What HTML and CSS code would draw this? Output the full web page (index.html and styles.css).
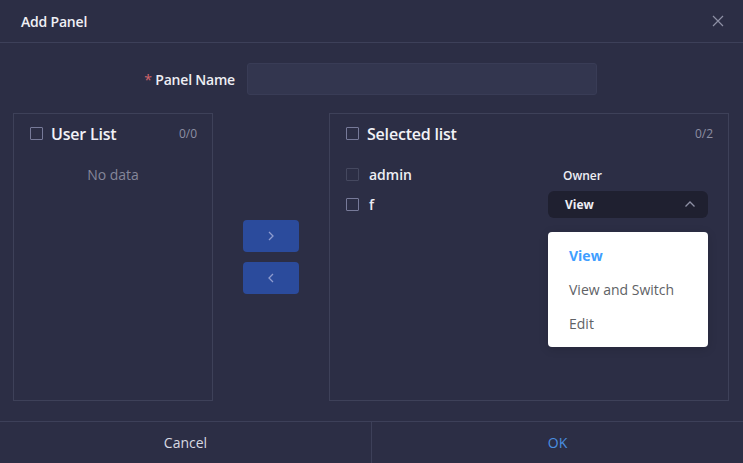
FILE: index.html
```html
<!DOCTYPE html>
<html>
<head>
<meta charset="utf-8">
<link rel="stylesheet" href="styles.css">
</head>
<body>
<div class="dialog">
  <div class="header">
    <span class="title">Add Panel</span>
    <svg class="close" width="12" height="12" viewBox="0 0 12 12"><path d="M1 1L11 11M11 1L1 11" stroke="#8e90a5" stroke-width="1.2" fill="none"/></svg>
  </div>
  <div class="content">
    <div class="form-row">
      <label class="label"><span class="req">*</span> Panel Name</label>
      <div class="input"></div>
    </div>
    <div class="transfer">
      <div class="panel left">
        <div class="panel-head">
          <span class="cb"></span>
          <span class="panel-title">User List</span>
          <span class="count">0/0</span>
        </div>
        <div class="empty">No data</div>
      </div>
      <div class="ops">
        <div class="op"><svg width="10" height="12" viewBox="0 0 10 12"><path d="M3 2L7 6L3 10" stroke="#8e9bcf" stroke-width="1.3" fill="none"/></svg></div>
        <div class="op"><svg width="10" height="12" viewBox="0 0 10 12"><path d="M7 2L3 6L7 10" stroke="#8e9bcf" stroke-width="1.3" fill="none"/></svg></div>
      </div>
      <div class="panel right">
        <div class="panel-head">
          <span class="cb"></span>
          <span class="panel-title">Selected list</span>
          <span class="count">0/2</span>
        </div>
        <div class="rows">
          <div class="row">
            <span class="cb disabled"></span>
            <span class="name">admin</span>
            <div class="role"><span class="owner">Owner</span></div>
          </div>
          <div class="row">
            <span class="cb"></span>
            <span class="name">f</span>
            <div class="role">
              <div class="select">
                <span>View</span>
                <svg width="12" height="8" viewBox="0 0 12 8"><path d="M1.5 6.5L6 2L10.5 6.5" stroke="#8e90a5" stroke-width="1.3" fill="none"/></svg>
                <div class="menu">
                  <div class="item active">View</div>
                  <div class="item">View and Switch</div>
                  <div class="item">Edit</div>
                </div>
              </div>
            </div>
          </div>
        </div>
      </div>
    </div>
  </div>
  <div class="footer">
    <div class="btn">Cancel</div>
    <div class="btn ok">OK</div>
  </div>
</div>
</body>
</html>
```

FILE: styles.css
```css
* { box-sizing: border-box; }
html, body { margin: 0; padding: 0; }
body {
  background: #2c2e45;
  font-family: "Open Sans", "Noto Sans", sans-serif;
  color: #e6e7ee;
  width: 743px;
  height: 463px;
  overflow: hidden;
}
.dialog { display: flex; flex-direction: column; height: 463px; }
.header {
  height: 43px;
  border-bottom: 1px solid #3d4059;
  display: flex;
  align-items: center;
  justify-content: space-between;
  padding: 0 19px 0 21px;
}
.title { font-size: 14px; font-weight: 600; color: #f0f0f5; letter-spacing: -0.2px; }
.close { display: block; }
.content { flex: 1; padding: 20px 13px 0 13px; }
.form-row { display: flex; align-items: center; height: 32px; }
.label {
  width: 222px;
  text-align: right;
  font-size: 14px;
  font-weight: 600;
  color: #eeeef4;
  letter-spacing: -0.2px;
}
.req { color: #d4656b; font-weight: 400; }
.input {
  margin-left: 12px;
  width: 350px;
  height: 32px;
  background: #33364f;
  border: 1px solid #393c56;
  border-radius: 3px;
}
.transfer { display: flex; margin-top: 18px; height: 288px; }
.panel { border: 1px solid #3e4159; height: 288px; }
.panel.left { width: 200px; }
.panel.right { width: 400px; }
.panel-head {
  display: flex;
  align-items: center;
  height: 39px;
  padding: 0 15px 0 16px;
}
.cb {
  width: 13px;
  height: 13px;
  border: 1px solid #777a99;
  border-radius: 1px;
  flex: none;
}
.cb.disabled { border-color: #45485f; }
.panel-title { margin-left: 8px; font-size: 16px; font-weight: 600; color: #f2f2f7; letter-spacing: -0.2px; }
.count { margin-left: auto; font-size: 12px; color: #8d8fa3; }
.empty { text-align: center; font-size: 14px; color: #85879a; margin-top: 12px; }
.ops {
  width: 116px;
  display: flex;
  flex-direction: column;
  align-items: center;
  justify-content: center;
  gap: 10px;
}
.op {
  width: 56px;
  height: 32px;
  background: #2b4b9c;
  border-radius: 4px;
  display: flex;
  align-items: center;
  justify-content: center;
}
.op svg { display: block; }
.rows { padding-top: 6px; }
.row { display: flex; align-items: center; height: 30px; padding-left: 16px; padding-right: 20px; }
.name { margin-left: 10px; font-size: 14px; font-weight: 600; color: #eeeef4; }
.role { margin-left: auto; width: 160px; }
.owner { padding-left: 15px; font-size: 12px; font-weight: 600; color: #eeeef4; }
.select {
  position: relative;
  height: 27px;
  background: #1f2030;
  border-radius: 6px;
  display: flex;
  align-items: center;
  justify-content: space-between;
  padding: 0 12px 0 17px;
  font-size: 12px;
  font-weight: 700;
  color: #eeeef4;
}
.select svg { display: block; }
.menu {
  position: absolute;
  top: 41px;
  left: 0;
  width: 160px;
  background: #ffffff;
  border-radius: 4px;
  padding: 7px 0 6px;
  box-shadow: 0 2px 10px rgba(0,0,0,0.15);
}
.item {
  height: 34px;
  line-height: 34px;
  padding-left: 21px;
  font-size: 14px;
  font-weight: 400;
  color: #606266;
}
.item.active { color: #409eff; font-weight: 700; }
.footer {
  height: 42px;
  border-top: 1px solid #3d4059;
  display: flex;
}
.btn {
  flex: 1;
  display: flex;
  align-items: center;
  justify-content: center;
  font-size: 14px;
  color: #d8d9e2;
}
.btn.ok { color: #4a8fe0; border-left: 1px solid #3d4059; }
```
